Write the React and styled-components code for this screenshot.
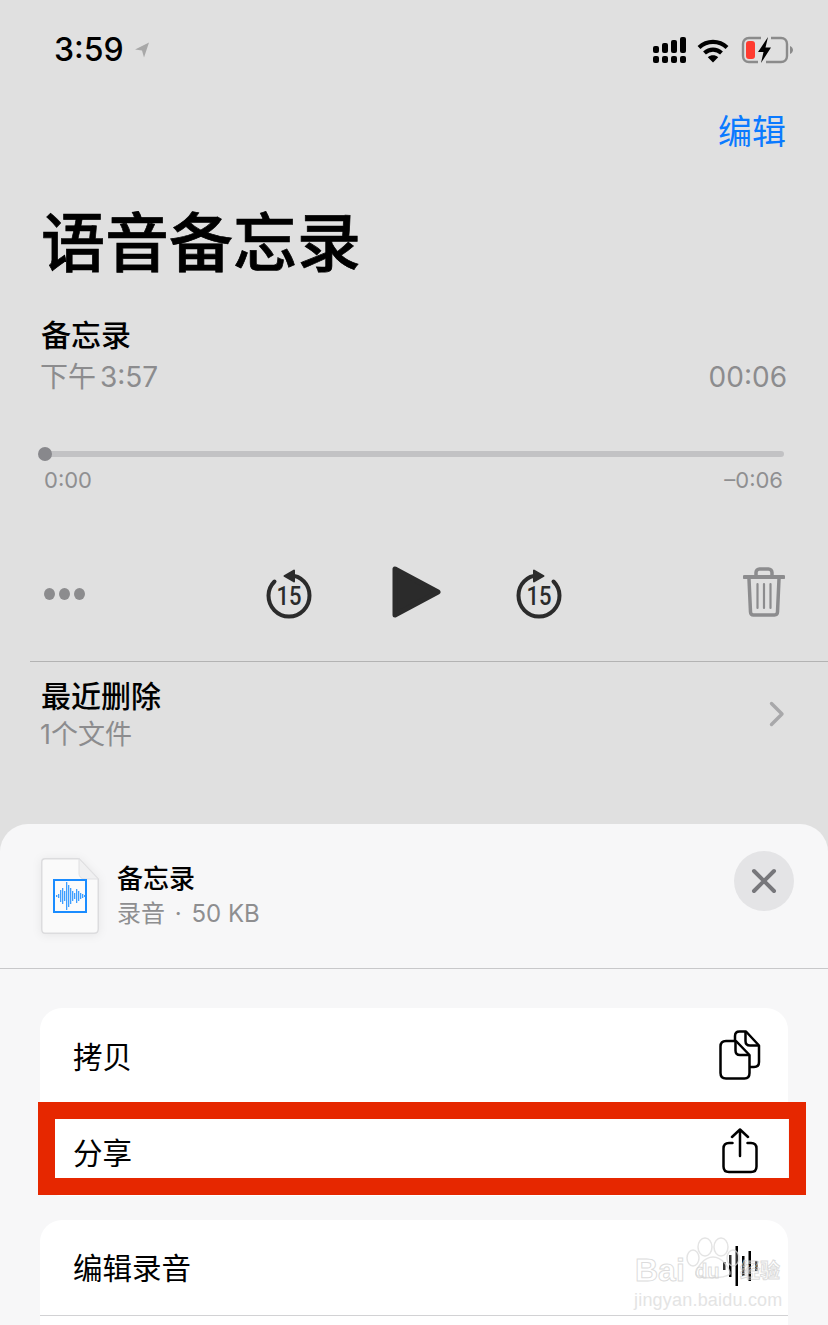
import styled, { createGlobalStyle } from 'styled-components'

const GlobalStyle = createGlobalStyle`
  html, body {
    margin: 0;
    padding: 0;
    background: #e0e0e0;
  }
  * {
    box-sizing: border-box;
  }
`

const FONT = `Inter, "Noto Sans CJK SC", sans-serif`

const Page = styled.div`
  position: relative;
  width: 828px;
  height: 1325px;
  overflow: hidden;
  background: #e0e0e0;
  font-family: ${FONT};
  color: #000;
`

const StatusBar = styled.div`
  height: 100px;
  display: flex;
  align-items: center;
  justify-content: space-between;
  padding: 0 34px 0 54px;
`

const TimeGroup = styled.div`
  display: flex;
  align-items: center;
  gap: 10px;
`

const Time = styled.span`
  font-size: 32px;
  font-weight: 500;
  line-height: 40px;
`

const StatusIcons = styled.div`
  display: flex;
  align-items: center;
  gap: 12px;
`

const SignalSvg = styled.svg`
  margin-right: -2px;
`

const NavRow = styled.div`
  height: 64px;
  display: flex;
  align-items: center;
  justify-content: flex-end;
  padding-right: 42px;
`

const EditButton = styled.span`
  font-size: 34px;
  line-height: 64px;
  color: #0a7aff;
`

const Title = styled.h1`
  margin: 39px 0 0;
  padding-left: 41px;
  font-size: 64px;
  line-height: 80px;
  font-weight: 500;
  -webkit-text-stroke: 0.700px #000;
`

const Memo = styled.div`
  margin-top: 32px;
  padding: 0 41px 0 41px;
`

const MemoName = styled.div`
  font-size: 30px;
  line-height: 40px;
  font-weight: 500;
`

const MemoMeta = styled.div`
  display: flex;
  justify-content: space-between;
  margin: 2px 0 0 -1px;
  font-size: 28px;
  line-height: 40px;
  word-spacing: -4px;
  color: #8c8c8e;
`

const Scrubber = styled.div`
  margin-top: 54px;
  padding: 0 44px 0 38px;
`

const Track = styled.div`
  position: relative;
  height: 6px;
  margin-left: 7px;
  border-radius: 3px;
  background: #c2c2c4;
`

const Thumb = styled.div`
  position: absolute;
  left: -7px;
  top: -4px;
  width: 14px;
  height: 14px;
  border-radius: 50%;
  background: #88888c;
`

const TimeLabels = styled.div`
  display: flex;
  justify-content: space-between;
  margin: 8px 1px 0 6px;
  font-size: 22px;
  line-height: 30px;
  color: #8f8f91;
`

const Controls = styled.div`
  display: flex;
  align-items: center;
  justify-content: space-between;
  height: 70px;
  margin-top: 64px;
  padding: 0 43px 0 44px;
`

const Dots = styled.div`
  display: flex;
  gap: 4px;
  width: 42px;
`

const Dot = styled.span`
  width: 11px;
  height: 12px;
  border-radius: 50%;
  background: #8c8c8e;
`

const Transport = styled.div`
  display: flex;
  align-items: center;
`

const PlayIcon = styled.svg`
  display: block;
  margin: 0 73px 4px 79px;
`

const TrashSlot = styled.div`
  width: 44px;
  display: flex;
  justify-content: flex-end;
  margin-bottom: 4px;
`

const Divider = styled.div`
  height: 1px;
  margin: 32px 0 0 30px;
  background: #b3b3b3;
`

const DeletedRow = styled.div`
  display: flex;
  align-items: center;
  justify-content: space-between;
  padding: 14px 43px 0 41px;
`

const DeletedTitle = styled.div`
  font-size: 30px;
  line-height: 40px;
  font-weight: 500;
`

const DeletedCount = styled.div`
  margin: -1px 0 0 -1px;
  font-size: 27px;
  line-height: 40px;
  color: #8c8c8e;
`

const ChevronSvg = styled.svg`
  margin-bottom: 4px;
`

const Sheet = styled.div`
  position: absolute;
  left: 0;
  right: 0;
  top: 824px;
  bottom: 0;
  border-radius: 28px 28px 0 0;
  background: #f7f7f8;
`

const SheetHeader = styled.div`
  height: 145px;
  display: flex;
  align-items: center;
  padding: 0 34px 0 41px;
  border-bottom: 1px solid #c8c8ca;
`

const FileSvg = styled.svg`
  filter: drop-shadow(0 1px 5px rgba(0, 0, 0, 0.07));
`

const FileInfo = styled.div`
  flex: 1;
  margin-left: 18px;
`

const FileName = styled.div`
  font-size: 26px;
  line-height: 36px;
  font-weight: 500;
`

const FileMeta = styled.div`
  font-size: 24px;
  line-height: 34px;
  word-spacing: 3px;
  color: #8e8e90;
`

const FileSize = styled.span`
  word-spacing: 0;
`

const CloseButton = styled.div`
  width: 60px;
  height: 60px;
  margin-top: -31px;
  border-radius: 50%;
  display: flex;
  align-items: center;
  justify-content: center;
  background: #e4e4e6;
`

const Card = styled.div`
  position: relative;
  width: 748px;
  margin: ${(p) => p.$top}px 0 0 40px;
  border-radius: 22px;
  background: #fff;
`

const Row = styled.div`
  height: ${(p) => (p.$line ? 96 : 94)}px;
  display: flex;
  align-items: center;
  justify-content: space-between;
  padding: ${(p) => p.$nudge || 0}px 26px ${(p) => (p.$line ? 3 : 0)}px 33px;
  font-size: 29.500px;
  border-bottom: ${(p) => (p.$line ? '1px solid #d2d2d4' : 'none')};
`

const IconBox = styled.div`
  width: 44px;
  display: flex;
  justify-content: center;
`

const Highlight = styled.div`
  position: absolute;
  left: -2px;
  top: 94px;
  width: 768px;
  height: 93px;
  border: 17px solid #e62700;
  pointer-events: none;
`

const Watermark = styled.div`
  position: absolute;
  left: 634px;
  top: 1236px;
  width: 150px;
  height: 72px;
  pointer-events: none;
`

const PawMark = styled.svg`
  position: absolute;
  left: 50px;
  top: 0;
`

const BaiduWord = styled.span`
  position: absolute;
  left: 1px;
  top: 18px;
  font-family: "Liberation Sans", sans-serif;
  font-size: 32px;
  line-height: 32px;
  font-weight: 700;
  color: rgba(255, 255, 255, 0.3);
  -webkit-text-stroke: 1px rgba(205, 205, 205, 0.7);
`

const DuWord = styled(BaiduWord)`
  left: 61px;
  top: 25px;
  font-size: 20px;
  line-height: 20px;
`

const JingyanWord = styled(BaiduWord)`
  left: 106px;
  top: 24px;
  font-family: "Noto Sans CJK SC", sans-serif;
  font-size: 20px;
  line-height: 20px;
  white-space: nowrap;
`

const DomainWord = styled.span`
  position: absolute;
  left: 0;
  top: 55px;
  font-family: "Liberation Sans", sans-serif;
  font-size: 18px;
  line-height: 18px;
  letter-spacing: 0.200px;
  color: #e4e4e4;
  white-space: nowrap;
`

const Signal = () => (
  <SignalSvg width="34" height="27" viewBox="0 0 34 27">
    <g fill="#000">
      <rect x="0" y="9" width="6" height="7" rx="2" />
      <rect x="9" y="6" width="6" height="10" rx="2" />
      <rect x="18" y="3" width="6" height="13" rx="2" />
      <rect x="27" y="0" width="6" height="16" rx="2" />
      <rect x="0" y="19" width="6" height="7" rx="2" />
      <rect x="9" y="19" width="6" height="7" rx="2" />
      <rect x="18" y="19" width="6" height="7" rx="2" />
      <rect x="27" y="19" width="6" height="7" rx="2" />
    </g>
  </SignalSvg>
)

const Wifi = () => (
  <svg width="32" height="25" viewBox="0 0 32 25">
    <path d="M2 9.500C10 2 22 2 30 9.500" fill="none" stroke="#000" strokeWidth="4.200" />
    <path d="M7.500 15C12.500 10.500 19.500 10.500 24.500 15" fill="none" stroke="#000" strokeWidth="4.200" />
    <path d="M10.800 19.200C14 16.600 18 16.600 21.200 19.200L16 24.600Z" fill="#000" />
  </svg>
)

const Battery = () => (
  <svg width="53" height="28" viewBox="0 0 53 28">
    <path d="M20 2H8C4.500 2 2 4.500 2 8V20C2 23.500 4.500 26 8 26H17" fill="none" stroke="#8b8b8b" strokeWidth="2.400" />
    <path d="M30 2H40C43.500 2 46 4.500 46 8V20C46 23.500 43.500 26 40 26H25" fill="none" stroke="#8b8b8b" strokeWidth="2.400" />
    <path d="M49 10C51 11 52 12.500 52 14C52 15.500 51 17 49 18Z" fill="#8b8b8b" />
    <rect x="5" y="5" width="9" height="18" rx="3" fill="#ff3b30" />
    <path d="M27 1L17 16H22.500L20 27L30 11.500H24.500Z" fill="#000" />
  </svg>
)

const LocationArrow = () => (
  <svg width="16" height="16" viewBox="0 0 15 16">
    <path d="M14.500 0.500L0.500 7.500L7.500 8.500L9.500 15.500Z" fill="#a8a8a8" />
  </svg>
)

const SkipIcon = ({ forward }) => (
  <svg width="48" height="50" viewBox="0 0 48 50">
    <g transform={forward ? 'translate(48 0) scale(-1 1)' : undefined}>
      <path
        d="M9.500 12.500C6 16 3.500 21 3.500 26.500C3.500 38 12.500 47.500 24 47.500C35.500 47.500 44.500 38 44.500 26.500C44.500 15.500 36 6.500 25 6.500"
        fill="none"
        stroke="#2b2b2b"
        strokeWidth="4"
        strokeLinecap="round"
      />
      <path d="M29 1.500V12.500L19.500 7Z" fill="#2b2b2b" stroke="#2b2b2b" strokeWidth="2" strokeLinejoin="round" />
    </g>
    <text x="24" y="36" textAnchor="middle" fontFamily="Roboto, sans-serif" fontWeight="500" fontSize="25" textLength="25" lengthAdjust="spacingAndGlyphs" fill="#2b2b2b">
      15
    </text>
  </svg>
)

const TrashIcon = () => (
  <svg width="42" height="50" viewBox="0 0 42 50">
    <g fill="none" stroke="#8c8c8e">
      <path d="M13 8V5.500C13 3.500 14.500 2 16.500 2H25.500C27.500 2 29 3.500 29 5.500V8" strokeWidth="3.500" />
      <path d="M1.500 10H40.500" strokeWidth="4" strokeLinecap="round" />
      <path d="M6 12L7.500 45C7.600 47 8.500 48 10.500 48H31.500C33.500 48 34.400 47 34.500 45L36 12" strokeWidth="3.500" />
      <path d="M14.500 17V41M21 17V41M27.500 17V41" strokeWidth="2.200" strokeLinecap="round" />
    </g>
  </svg>
)

const Chevron = () => (
  <ChevronSvg width="16" height="26" viewBox="0 0 16 26">
    <path d="M2.500 2.500L13 13L2.500 23.500" fill="none" stroke="#a8a8aa" strokeWidth="3.400" strokeLinecap="round" strokeLinejoin="round" />
  </ChevronSvg>
)

const bars = [
  [15, 1], [17, 2], [19, 6], [21, 8], [23, 5], [25, 14], [27, 11], [29, 8], [31, 5], [33, 3], [35, 7], [37, 5], [39, 3], [41, 2], [43, 1],
]

const FileIcon = () => (
  <FileSvg width="58" height="76" viewBox="0 0 58 76">
    <path d="M4 .750H38L57.250 21V71C57.250 73.500 55.500 75.250 53 75.250H4C2 75.250 .750 73.500 .750 71V4C.750 2 2 .750 4 .750Z" fill="#fafafa" stroke="#dcdcde" strokeWidth="1.500" />
    <path d="M38 .750V15C38 18.500 40 21 44 21H57.250Z" fill="#f0f0f1" stroke="#e0e0e2" strokeWidth="1" />
    <rect x="13" y="22" width="32" height="32" fill="#fbfbfb" stroke="#1a8cff" strokeWidth="2" />
    {bars.map(([x, h]) => (
      <rect key={x} x={x} y={38 - h} width="1.300" height={h * 2} fill="#3e9eff" />
    ))}
  </FileSvg>
)

const CloseIcon = () => (
  <svg width="26" height="26" viewBox="0 0 26 26">
    <path d="M3 3L23 23M23 3L3 23" stroke="#77777b" strokeWidth="4" strokeLinecap="round" />
  </svg>
)

const CopyIcon = () => (
  <svg width="42" height="50" viewBox="0 0 42 50" fill="none" stroke="#000" strokeWidth="2.500" strokeLinejoin="round">
    <path d="M16 10V6C16 3.500 17.500 1.500 20.500 1.500H27L40 15.500V32C40 35 38.500 37 35 37H31" />
    <path d="M26.500 2V11C26.500 14 28 15.500 31 15.500H40" />
    <path d="M7 11H17L30.500 25V43C30.500 46.500 28.500 48.500 25.500 48.500H7C3.500 48.500 1.500 46.500 1.500 43V16.500C1.500 13 3.500 11 7 11Z" fill="#fff" />
    <path d="M16.500 11.500V20.500C16.500 23.500 18 25 21 25H30" />
  </svg>
)

const ShareIcon = () => (
  <svg width="36" height="46" viewBox="0 0 36 46" fill="none" stroke="#000" strokeWidth="2.500" strokeLinecap="round" strokeLinejoin="round">
    <path d="M10.500 15H7C3.500 15 1.500 17 1.500 20.500V38.500C1.500 42 3.500 44 7 44H29C32.500 44 34.500 42 34.500 38.500V20.500C34.500 17 32.500 15 29 15H25.500" />
    <path d="M18 28V2M10 9L18 1.500L26 9" />
  </svg>
)

const WaveIcon = () => (
  <svg width="36" height="40" viewBox="0 0 36 40" fill="#000">
    <rect x="1" y="16" width="2.500" height="8" />
    <rect x="7" y="9" width="2.500" height="22" />
    <rect x="13.500" y="0" width="2.500" height="40" />
    <rect x="20" y="10" width="2.500" height="20" />
    <rect x="26.500" y="5" width="2.500" height="30" />
    <rect x="33" y="15" width="2.500" height="10" />
  </svg>
)

const App = () => {
  return (
    <Page>
      <GlobalStyle />
      <StatusBar>
        <TimeGroup>
          <Time>3:59</Time>
          <LocationArrow />
        </TimeGroup>
        <StatusIcons>
          <Signal />
          <Wifi />
          <Battery />
        </StatusIcons>
      </StatusBar>
      <NavRow>
        <EditButton>编辑</EditButton>
      </NavRow>
      <Title>语音备忘录</Title>
      <Memo>
        <MemoName>备忘录</MemoName>
        <MemoMeta>
          <span>下午 3:57</span>
          <span>00:06</span>
        </MemoMeta>
      </Memo>
      <Scrubber>
        <Track>
          <Thumb />
        </Track>
        <TimeLabels>
          <span>0:00</span>
          <span>–0:06</span>
        </TimeLabels>
      </Scrubber>
      <Controls>
        <Dots>
          <Dot />
          <Dot />
          <Dot />
        </Dots>
        <Transport>
          <SkipIcon />
          <PlayIcon width="50" height="56" viewBox="0 0 50 56">
            <path d="M3 5V51L46 28Z" fill="#2b2b2b" stroke="#2b2b2b" strokeWidth="5" strokeLinejoin="round" />
          </PlayIcon>
          <SkipIcon forward />
        </Transport>
        <TrashSlot>
          <TrashIcon />
        </TrashSlot>
      </Controls>
      <Divider />
      <DeletedRow>
        <div>
          <DeletedTitle>最近删除</DeletedTitle>
          <DeletedCount>1个文件</DeletedCount>
        </div>
        <Chevron />
      </DeletedRow>
      <Sheet>
        <SheetHeader>
          <FileIcon />
          <FileInfo>
            <FileName>备忘录</FileName>
            <FileMeta>录音 · <FileSize>50 KB</FileSize></FileMeta>
          </FileInfo>
          <CloseButton>
            <CloseIcon />
          </CloseButton>
        </SheetHeader>
        <Card $top={39}>
          <Row>
            拷贝
            <IconBox>
              <CopyIcon />
            </IconBox>
          </Row>
          <Row $nudge={4}>
            分享
            <IconBox>
              <ShareIcon />
            </IconBox>
          </Row>
          <Highlight />
        </Card>
        <Card $top={24}>
          <Row $line>
            编辑录音
            <IconBox>
              <WaveIcon />
            </IconBox>
          </Row>
          <Row />
        </Card>
      </Sheet>
      <Watermark>
        <PawMark width="60" height="44" viewBox="0 0 60 44" fill="#fff" fillOpacity="0.2" stroke="#d8d8d8" strokeOpacity="0.7" strokeWidth="1.500">
          <ellipse cx="21" cy="11" rx="7" ry="9" />
          <ellipse cx="37" cy="11" rx="7" ry="9" />
          <ellipse cx="9" cy="22" rx="6" ry="8" />
          <ellipse cx="49" cy="22" rx="6" ry="8" />
          <path d="M29 21C20 21 12 32 12 38C12 43 40 43 46 38C46 32 38 21 29 21Z" />
        </PawMark>
        <BaiduWord>Bai</BaiduWord>
        <DuWord>du</DuWord>
        <JingyanWord>经验</JingyanWord>
        <DomainWord>jingyan.baidu.com</DomainWord>
      </Watermark>
    </Page>
  )
}

export default App
